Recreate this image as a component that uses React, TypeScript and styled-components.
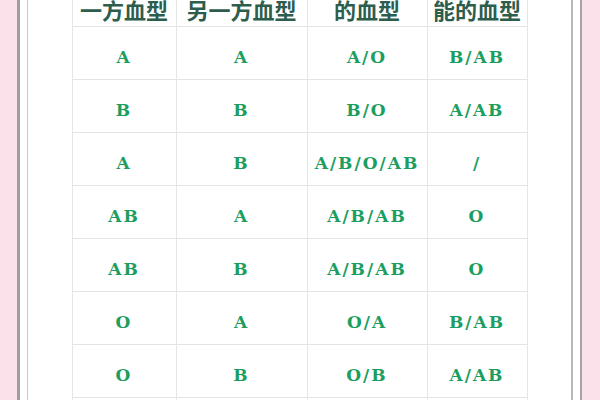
import styled, { createGlobalStyle } from 'styled-components';

const GlobalStyle = createGlobalStyle`
  html, body {
    margin: 0;
    padding: 0;
    background: #fbe1e9;
    overflow: hidden;
  }
`;

const Page = styled.div`
  width: 600px;
  height: 400px;
  overflow: hidden;
  background: #fbe1e9;
`;

const Frame = styled.div`
  box-sizing: border-box;
  margin-left: 17px;
  width: 565px;
  height: 460px;
  margin-top: -30px;
  background: #ffffff;
  border-left: 3px solid #9d9d9d;
  border-right: 2px solid #a5a5a5;
  padding: 0 7px;
`;

const Inner = styled.div`
  height: 100%;
  border-left: 1px solid #c9c9c9;
  border-right: 2px solid #b8b8b8;
  display: flex;
  justify-content: center;
`;

const Table = styled.table`
  margin-top: -9px;
  border-collapse: collapse;
  table-layout: fixed;
  width: 455px;
  height: fit-content;
`;

const HeadCell = styled.th`
  height: 62px;
  padding: 0 0 2px;
  vertical-align: bottom;
  border: 1px solid #e4e4e4;
  font-family: "Noto Sans CJK SC", "Noto Sans", sans-serif;
  font-weight: 700;
  font-size: 22px;
  line-height: 30px;
  color: #2d5d4d;
  white-space: nowrap;
`;

const Row = styled.tr`
  height: 53px;
`;

const Cell = styled.td`
  padding: 8px 0 0;
  border: 1px solid #e4e4e4;
  text-align: center;
  vertical-align: middle;
  font-family: "DejaVu Serif", "Liberation Serif", serif;
  font-weight: 700;
  font-size: 17px;
  letter-spacing: 2px;
  color: #1c9e60;
`;

const columns = [104, 131, 120, 100];

const heads = [
  ['父母其中', '一方血型'],
  ['父母', '另一方血型'],
  ['孩子可能', '的血型'],
  ['孩子不可', '能的血型'],
];

const rows = [
  ['A', 'A', 'A/O', 'B/AB'],
  ['B', 'B', 'B/O', 'A/AB'],
  ['A', 'B', 'A/B/O/AB', '/'],
  ['AB', 'A', 'A/B/AB', 'O'],
  ['AB', 'B', 'A/B/AB', 'O'],
  ['O', 'A', 'O/A', 'B/AB'],
  ['O', 'B', 'O/B', 'A/AB'],
  ['O', 'O', 'O', 'A/B/AB'],
];

const App = (): JSX.Element => (
  <Page>
    <GlobalStyle />
    <Frame>
      <Inner>
        <Table>
          <colgroup>
            { columns.map((w, i) => <col key={ i } style={ { width: w } } />) }
          </colgroup>
          <thead>
            <tr>
              { heads.map(([a, b]) => (
                <HeadCell key={ a + b }>{ a }<br />{ b }</HeadCell>
              )) }
            </tr>
          </thead>
          <tbody>
            { rows.map((r, i) => (
              <Row key={ i }>
                { r.map((v, j) => <Cell key={ j }>{ v }</Cell>) }
              </Row>
            )) }
          </tbody>
        </Table>
      </Inner>
    </Frame>
  </Page>
);

export default App;
